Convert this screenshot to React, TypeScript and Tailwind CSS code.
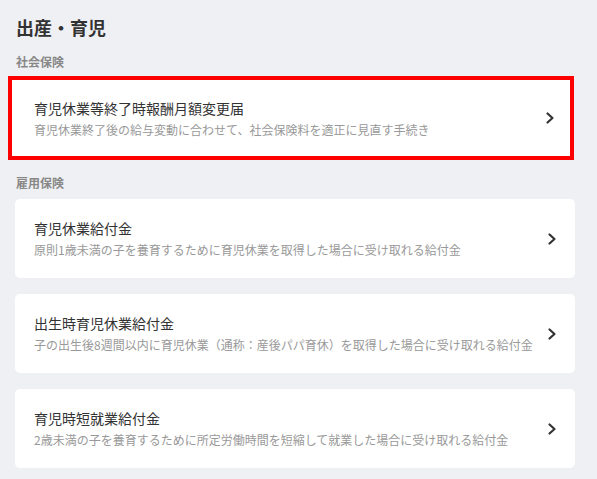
import React from "react";

const font = { fontFamily: '"Noto Sans CJK JP", "Noto Sans", sans-serif' };

function Chevron() {
  return (
    <svg width="12" height="14" viewBox="0 0 12 14" className="shrink-0">
      <path d="M3.5 2.5 L8.5 7 L3.5 11.5" fill="none" stroke="#333" strokeWidth="2.2" strokeLinecap="round" strokeLinejoin="round" />
    </svg>
  );
}

function CardBody({ title, desc }: { title: string; desc: string }) {
  return (
    <div className="flex-1 min-w-0 flex flex-col gap-[3px]">
      <div className="text-[14px] leading-[20px] text-[#333]">{title}</div>
      <div className="text-[12px] leading-[18px] text-[#999] whitespace-nowrap">{desc}</div>
    </div>
  );
}

const items = [
  {
    title: "育児休業給付金",
    desc: "原則1歳未満の子を養育するために育児休業を取得した場合に受け取れる給付金",
  },
  {
    title: "出生時育児休業給付金",
    desc: "子の出生後8週間以内に育児休業（通称：産後パパ育休）を取得した場合に受け取れる給付金",
  },
  {
    title: "育児時短就業給付金",
    desc: "2歳未満の子を養育するために所定労働時間を短縮して就業した場合に受け取れる給付金",
  },
];

export default function App() {
  return (
    <div className="w-[597px] h-[479px] overflow-hidden bg-[#eff0f3]" style={font}>
      <div className="flex flex-col px-[15px] pt-[14px]">
        <h1 className="ml-px text-[18px] leading-[26px] font-bold text-[#333]">出産・育児</h1>
        <div className="ml-px mt-[13px] text-[12px] leading-[18px] font-bold text-[#888]">社会保険</div>
        <div className="mt-[5px] -ml-[7px] w-[566px] h-[84px] border-4 border-[#ff0000] bg-white flex items-center pl-[22px] pr-[14px]">
          <CardBody
            title="育児休業等終了時報酬月額変更届"
            desc="育児休業終了後の給与変動に合わせて、社会保険料を適正に見直す手続き"
          />
          <Chevron />
        </div>
        <div className="ml-px mt-[14px] text-[12px] leading-[18px] font-bold text-[#888]">雇用保険</div>
        <div className="mt-[7px] flex flex-col gap-[16px]">
          {items.map((it) => (
            <div key={it.title} className="h-[79px] w-[560px] rounded-[5px] bg-white flex items-center pl-[19px] pr-[17px]">
              <CardBody title={it.title} desc={it.desc} />
              <Chevron />
            </div>
          ))}
        </div>
      </div>
    </div>
  );
}
